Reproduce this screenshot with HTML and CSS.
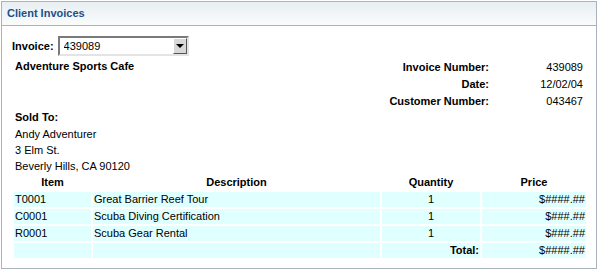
FILE: index.html
```html
<!DOCTYPE html>
<html lang="en">
<head>
  <meta charset="UTF-8" />
  <title>Client Invoices</title>
  <link rel="stylesheet" href="styles.css">
</head>
<body>
  <div class="panel">
    <div class="panel-head">Client Invoices</div>
    <div class="panel-body">
      <div class="invoice-pick">
        <label for="invoiceSelect">Invoice:</label>
        <div class="select-wrap">
          <select id="invoiceSelect">
            <option>439089</option>
          </select>
          <span class="select-btn"><span class="arrow"></span></span>
        </div>
      </div>

      <div class="info">
        <div class="company">Adventure Sports Cafe</div>
        <table class="meta">
          <tr><th>Invoice Number:</th><td>439089</td></tr>
          <tr><th>Date:</th><td>12/02/04</td></tr>
          <tr><th>Customer Number:</th><td>043467</td></tr>
        </table>
      </div>

      <div class="sold-to">
        <div class="sold-title">Sold To:</div>
        <div>Andy Adventurer</div>
        <div>3 Elm St.</div>
        <div>Beverly Hills, CA 90120</div>
      </div>

      <table class="items">
        <thead>
          <tr>
            <th class="c-item">Item</th>
            <th class="c-desc">Description</th>
            <th class="c-qty">Quantity</th>
            <th class="c-price">Price</th>
          </tr>
        </thead>
        <tbody>
          <tr><td>T0001</td><td>Great Barrier Reef Tour</td><td class="center">1</td><td class="right">$####.##</td></tr>
          <tr><td>C0001</td><td>Scuba Diving Certification</td><td class="center">1</td><td class="right">$###.##</td></tr>
          <tr><td>R0001</td><td>Scuba Gear Rental</td><td class="center">1</td><td class="right">$###.##</td></tr>
          <tr><td></td><td></td><td class="right bold">Total:</td><td class="right">$####.##</td></tr>
        </tbody>
      </table>
    </div>
  </div>
</body>
</html>
```

FILE: styles.css
```css
body {
  margin: 0;
  font-family: 'Liberation Sans', Arial, sans-serif;
  font-size: 11px;
  color: #000;
  background: #fff;
}
.panel {
  margin: 1px 0 0 1px;
  width: 594px;
  height: 266px;
  border: 1px solid #aab3bb;
}
.panel-head {
  height: 23px;
  line-height: 23px;
  padding-left: 5px;
  border-bottom: 1px solid #aab3bb;
  background: linear-gradient(#e8eef1, #fafcfc);
  color: #1d4f8c;
  font-weight: bold;
}
.panel-body {
  padding: 10px 11px 0 10px;
}
.invoice-pick {
  display: flex;
  align-items: center;
  gap: 4px;
  height: 20px;
}
.invoice-pick label {
  font-weight: bold;
}
.select-wrap {
  position: relative;
  width: 131px;
  height: 20px;
}
.select-wrap select {
  appearance: none;
  -webkit-appearance: none;
  width: 100%;
  height: 100%;
  margin: 0;
  padding: 0 0 0 4px;
  border: 2px solid;
  border-color: #7a7a7a #e4e4e4 #e4e4e4 #7a7a7a;
  background: #fff;
  font-family: 'Liberation Sans', Arial, sans-serif;
  font-size: 11px;
  color: #000;
  border-radius: 0;
}
.select-btn {
  position: absolute;
  right: 2px;
  top: 2px;
  width: 14px;
  height: 16px;
  box-sizing: border-box;
  background: #d8d8d8;
  border: 1px solid;
  border-color: #fff #555 #555 #fff;
  display: flex;
  align-items: center;
  justify-content: center;
}
.arrow {
  width: 0;
  height: 0;
  border-left: 4px solid transparent;
  border-right: 4px solid transparent;
  border-top: 4px solid #000;
}
.info {
  display: flex;
  justify-content: space-between;
  margin-top: 2px;
  padding-left: 3px;
}
.company {
  font-weight: bold;
  line-height: 17px;
}
.meta {
  border-collapse: collapse;
}
.meta th, .meta td {
  padding: 0;
  height: 17px;
  text-align: right;
}
.meta th {
  width: 200px;
}
.meta td {
  width: 94px;
  padding-right: 2px;
}
.sold-to {
  padding-left: 3px;
  line-height: 16px;
}
.sold-title {
  font-weight: bold;
  line-height: 17px;
}
.items {
  width: 576px;
  border-spacing: 2px;
  margin-top: -1px;
}
.items th {
  height: 15px;
  line-height: 15px;
  padding: 0;
  font-weight: bold;
  text-align: center;
}
.items td {
  height: 15px;
  line-height: 15px;
  padding: 0 1px;
  background: #e0ffff;
}
.c-item { width: 77px; }
.c-desc { width: 287px; }
.c-qty { width: 98px; }
.center { text-align: center; }
.right { text-align: right; }
.bold { font-weight: bold; }
```
